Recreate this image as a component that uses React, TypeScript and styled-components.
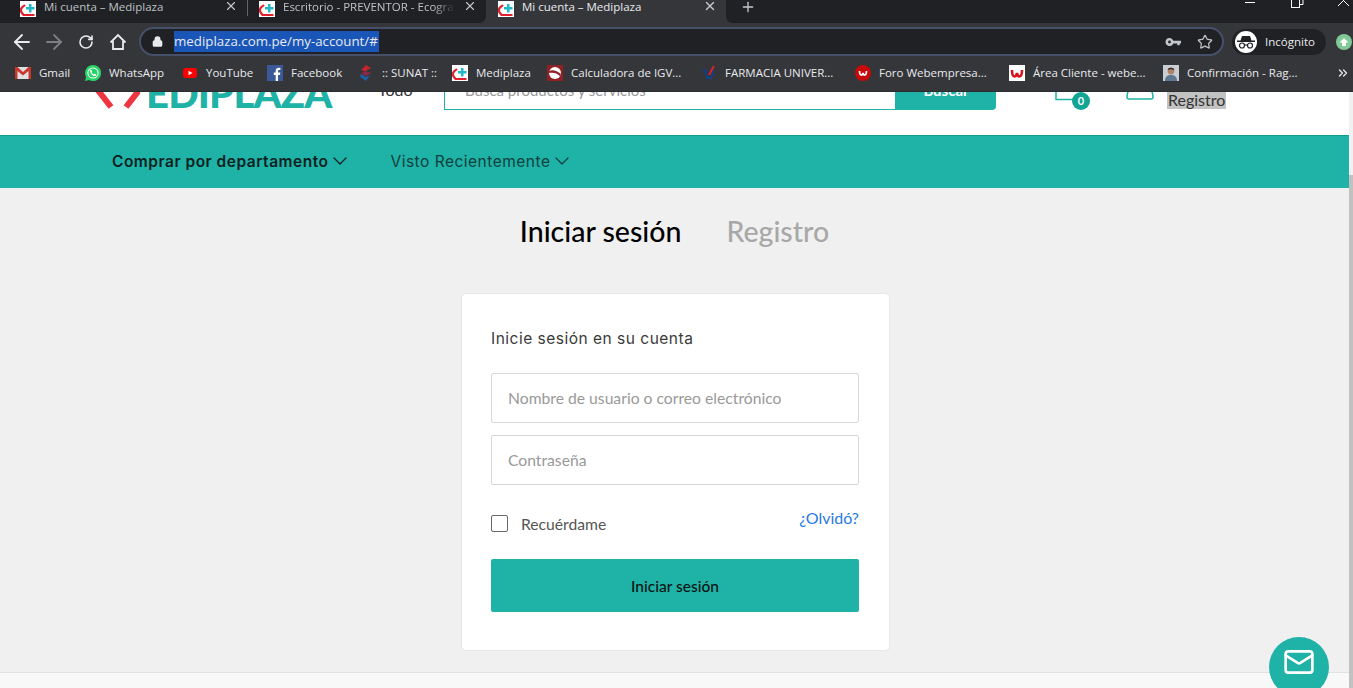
import React from 'react'
import styled, { createGlobalStyle } from 'styled-components'
import { ArrowLeft, ArrowRight, RotateCw, Lock, Star, X, Plus, ChevronDown, Mail, ChevronsRight } from 'lucide-react'

const GlobalStyle = createGlobalStyle`
  html, body { margin: 0; padding: 0; height: 100%; overflow: hidden; }
  * { box-sizing: border-box; }
`

const Favicon = () => (
  <svg width="16" height="16" viewBox="0 0 16 16">
    <rect width="16" height="16" fill="#fff" />
    <path d="M5 4 L2 6.500 C0.800 8 0.800 10.500 2 12 L3.500 14 H14.500" fill="none" stroke="#e0202a" strokeWidth="2.200" />
    <path d="M9 3h2.500v3H14.500v2.500H11.500V11.500H9V8.500H6V6h3z" fill="#22b8c9" />
  </svg>
)

const Square = styled.span<{ $bg: string }>`
  width: 16px;
  height: 16px;
  flex: none;
  display: flex;
  align-items: center;
  justify-content: center;
  background: ${p => p.$bg};
`

const bookmarks: { label: string; icon: React.ReactNode; width: number }[] = [
  {
    label: 'Gmail', width: 70,
    icon: (
      <svg width="16" height="16" viewBox="0 0 16 16">
        <rect y="2" width="16" height="12" fill="#e0e0e0" />
        <path d="M0 2h2.500L8 7l5.500-5H16v12h-2.500V6L8 10.500 2.500 6v8H0z" fill="#c9372c" />
      </svg>
    ),
  },
  {
    label: 'WhatsApp', width: 97,
    icon: (
      <svg width="16" height="16" viewBox="0 0 16 16">
        <path d="M8 0a8 8 0 0 0-6.900 12L0 16l4.100-1.100A8 8 0 1 0 8 0z" fill="#25d366" />
        <circle cx="8" cy="8" r="5.600" fill="#fff" />
        <circle cx="8" cy="8" r="4.600" fill="#25d366" />
        <path d="M5.500 5c1-1 1.500 1 1.500 1.500L6.600 7.200c.5 1 1.200 1.700 2.200 2.200l.8-.6c.6.200 2 .8 1.400 1.600-1 1.200-3 .4-4.400-1C5.300 8 4.600 6 5.500 5z" fill="#fff" />
      </svg>
    ),
  },
  {
    label: 'YouTube', width: 85,
    icon: (
      <svg width="16" height="16" viewBox="0 0 16 16">
        <rect x="1" y="3" width="14" height="10" rx="3" fill="#f00" />
        <path d="M6.500 5.700v4.600L10.500 8z" fill="#fff" />
      </svg>
    ),
  },
  {
    label: 'Facebook', width: 91,
    icon: (
      <Square $bg="#3b5998">
        <svg width="16" height="16" viewBox="0 0 16 16">
          <path d="M11 16V10h2l.3-2.400H11V6.200c0-.7.200-1.200 1.200-1.200h1.200V2.900C13 2.800 12.400 2.800 11.800 2.800 10 2.800 8.700 3.900 8.700 6v1.600H6.800V10h1.900v6z" fill="#fff" />
        </svg>
      </Square>
    ),
  },
  {
    label: ':: SUNAT ::', width: 94,
    icon: (
      <svg width="16" height="16" viewBox="0 0 16 16">
        <path d="M8 0l5 3-6 3.500L3 5z" fill="#c0272d" />
        <path d="M13 8l-5 3-5-2.500L8 6z" fill="#8a2a4a" />
        <path d="M2 9l6 3 4-1.500L8 16 2.500 12z" fill="#1d5fa8" />
      </svg>
    ),
  },
  { label: 'Mediplaza', width: 95, icon: <Favicon /> },
  {
    label: 'Calculadora de IGV...', width: 154,
    icon: (
      <Square $bg="#8f2026">
        <svg width="16" height="16" viewBox="0 0 16 16">
          <circle cx="8" cy="8" r="6" fill="#fff" />
          <path d="M2 6c4-2 8 0 12 3l-1 2C10 8 6 7 2.200 8z" fill="#8f2026" />
        </svg>
      </Square>
    ),
  },
  {
    label: 'FARMACIA UNIVER...', width: 154,
    icon: (
      <svg width="16" height="16" viewBox="0 0 16 16">
        <path d="M2 5h2l2 8h4l3-8" fill="none" stroke="#123f8c" strokeWidth="2" />
        <path d="M8 10l5-9" fill="none" stroke="#d8232a" strokeWidth="2" />
      </svg>
    ),
  },
  {
    label: 'Foro Webempresa...', width: 154,
    icon: (
      <svg width="16" height="16" viewBox="0 0 16 16">
        <circle cx="8" cy="8" r="8" fill="#c90a0a" />
        <path d="M4.500 6c0 5 3 5 3.500 2 .5 3 3.500 3 3.500-2" fill="none" stroke="#fff" strokeWidth="1.700" />
      </svg>
    ),
  },
  {
    label: 'Área Cliente - webe...', width: 154,
    icon: (
      <Square $bg="#fff">
        <svg width="16" height="16" viewBox="0 0 16 16">
          <path d="M3 5c0 8 4 8 5 3 1 5 5 5 5-3" fill="none" stroke="#d8121a" strokeWidth="2.600" />
        </svg>
      </Square>
    ),
  },
  {
    label: 'Confirmación - Rag...', width: 170,
    icon: (
      <Square $bg="#c9ced4">
        <svg width="16" height="16" viewBox="0 0 16 16">
          <circle cx="8" cy="6" r="3.400" fill="#b08468" />
          <path d="M4.700 5c0-3 6.600-3 6.600 0-2-1-4.600-1-6.600 0z" fill="#2c2c2c" />
          <path d="M2 16c0-5 3-6 6-6s6 1 6 6z" fill="#5d7890" />
        </svg>
      </Square>
    ),
  },
]

const Page = styled.div`
  width: 1353px;
  height: 688px;
  overflow: hidden;
  display: flex;
  flex-direction: column;
  font-family: 'Lato', 'Liberation Sans', sans-serif;
  background: #f0f0f0;
`

const TabStrip = styled.div`
  height: 23px;
  flex: none;
  display: flex;
  background: #202124;
  color: #bdc1c6;
  font: 11.500px 'Open Sans', 'Liberation Sans', sans-serif;
`

const Tab = styled.div<{ $active?: boolean; $width: number; $lead: number }>`
  width: ${p => p.$width}px;
  padding-left: ${p => p.$lead}px;
  display: flex;
  align-items: center;
  gap: 8px;
  flex: none;
  position: relative;
  color: ${p => (p.$active ? '#e8eaed' : '#bdc1c6')};
  background: ${p => (p.$active ? '#35363a' : 'transparent')};
  & > svg:first-child { margin-top: -6px; }
  ${p => p.$active && `
    &::before, &::after {
      content: '';
      position: absolute;
      bottom: 0;
      width: 6px;
      height: 6px;
    }
    &::before {
      left: -6px;
      background: radial-gradient(circle at 0 0, #202124 5.500px, #35363a 6px);
    }
    &::after {
      right: -6px;
      background: radial-gradient(circle at 100% 0, #202124 5.500px, #35363a 6px);
    }
  `}
`

const TabTitle = styled.span<{ $fade?: boolean }>`
  flex: 1;
  min-width: 0;
  white-space: nowrap;
  overflow: hidden;
  margin-top: -11px;
  ${p => p.$fade && `
    -webkit-mask-image: linear-gradient(to right, #000 88%, transparent);
    mask-image: linear-gradient(to right, #000 88%, transparent);
  `}
`

const TabClose = styled(X)`
  flex: none;
  margin: -11px 9px 0 0;
  color: #c4c7cb;
`

const TabDivider = styled.div`
  width: 1px;
  height: 16px;
  flex: none;
  background: #5f6368;
`

const NewTab = styled(Plus)`
  flex: none;
  margin: -1px 0 0 14px;
  color: #c4c7cb;
`

const WindowButtons = styled.div`
  margin-left: auto;
  display: flex;
  align-items: flex-start;
  gap: 33px;
  padding: 0 3px 0 0;
  color: #fff;
`

const WindowGlyph = styled.span`
  width: 13px;
  height: 12px;
  display: block;
  margin-top: -4px;
`

const MinimizeGlyph = styled.span`
  width: 10px;
  height: 1px;
  margin-top: 2px;
  margin-right: 3px;
  background: #fff;
`

const Toolbar = styled.div`
  height: 33px;
  flex: none;
  display: flex;
  align-items: center;
  padding: 4px 0 0 14px;
  background: #35363a;
  color: #dee1e6;
`

const ToolButton = styled.span<{ $dim?: boolean }>`
  width: 16px;
  margin-right: 16px;
  display: flex;
  justify-content: center;
  color: ${p => (p.$dim ? '#7b7e83' : '#e8eaed')};
  svg { flex: none; }
`

const AddressBar = styled.div`
  width: 1085px;
  height: 29px;
  margin-left: -3px;
  display: flex;
  align-items: center;
  padding: 0 9px 0 11px;
  background: #202124;
  border: 2px solid #46506a;
  border-radius: 15px;
  font: 13.300px 'Open Sans', 'Liberation Sans', sans-serif;
`

const Selected = styled.span`
  margin-left: 11px;
  width: 205px;
  height: 21px;
  line-height: 21px;
  background: #1a56b8;
  color: #e8eaed;
  white-space: nowrap;
`

const AddressEnd = styled.div`
  margin-left: auto;
  display: flex;
  align-items: center;
  gap: 16px;
  color: #c4c7cb;
`

const IncognitoPill = styled.div`
  width: 94px;
  height: 26px;
  margin-left: 8px;
  display: flex;
  align-items: center;
  gap: 8px;
  padding-left: 3px;
  background: #202124;
  border-radius: 13px;
  font: 11.500px 'Open Sans', 'Liberation Sans', sans-serif;
  color: #e8eaed;
`

const IncognitoFace = styled.span`
  width: 22px;
  height: 22px;
  flex: none;
  border-radius: 50%;
  background: #fff;
  display: flex;
  align-items: center;
  justify-content: center;
`

const ExtensionDot = styled.span`
  width: 16px;
  height: 16px;
  margin-left: 10px;
  flex: none;
  border-radius: 50%;
  background: #81c995;
  display: flex;
  align-items: center;
  justify-content: center;
`

const BookmarkBar = styled.div`
  height: 36px;
  flex: none;
  display: flex;
  align-items: center;
  padding: 0 0 2px 15px;
  background: #35363a;
  border-bottom: 1px solid #2a2b2e;
  color: #e8eaed;
  font: 11.500px 'Open Sans', 'Liberation Sans', sans-serif;
`

const Bookmark = styled.div<{ $width: number }>`
  width: ${p => p.$width}px;
  flex: none;
  display: flex;
  align-items: center;
  gap: 8px;
  white-space: nowrap;
`

const BookmarkMore = styled(ChevronsRight)`
  margin-left: auto;
  margin-right: 3px;
  color: #dfe1e5;
`

const Viewport = styled.div`
  flex: 1;
  min-height: 0;
  display: flex;
`

const Scrollbar = styled.div`
  width: 4px;
  flex: none;
  padding-top: 83px;
  background: #f1f1f1;
  &::after {
    content: '';
    display: block;
    height: 100%;
    background: #c1c1c1;
  }
`

const Content = styled.div`
  flex: 1;
  min-width: 0;
  display: flex;
  flex-direction: column;
  position: relative;
  overflow: hidden;
`

const Header = styled.header`
  height: 43px;
  flex: none;
  display: flex;
  align-items: flex-end;
  padding: 0 0 26px 95px;
  background: #fff;
  overflow: hidden;
`

const LogoMark = styled.svg`
  flex: none;
  margin-bottom: 0;
`

const LogoText = styled.span`
  width: 190px;
  height: 40px;
  flex: none;
  margin-left: 6px;
  line-height: 48px;
  font-size: 40px;
  font-weight: 900;
  letter-spacing: -0.8px;
  color: #1fb2a7;
  overflow: hidden;
  white-space: nowrap;
`

const CategorySelect = styled.div`
  width: 66px;
  margin-left: 42px;
  margin-bottom: 10px;
  display: flex;
  align-items: center;
  gap: 9px;
  font-size: 16px;
  line-height: 18px;
  color: #333;
  flex: none;
`

const SearchInput = styled.div`
  width: 452px;
  height: 40px;
  flex: none;
  padding: 0 0 0 20px;
  display: flex;
  align-items: center;
  border: 1px solid #1fb2a7;
  border-top: 0;
  color: #999;
  font-size: 15px;
  margin-bottom: -1px;
`

const SearchButton = styled.button`
  width: 100px;
  height: 40px;
  flex: none;
  margin-bottom: -1px;
  border: 0;
  border-radius: 0 0 4px 0;
  background: #1fb2a7;
  color: #fff;
  font: 700 15px 'Lato', sans-serif;
`

const CartIcon = styled.div`
  width: 36px;
  height: 30px;
  margin-left: 59px;
  flex: none;
  position: relative;
  margin-bottom: -1px;
`

const CartBadge = styled.span`
  position: absolute;
  right: 1px;
  bottom: 0;
  width: 18px;
  height: 18px;
  border-radius: 50%;
  background: #12a594;
  color: #fff;
  font: 700 11px/18px 'Lato', sans-serif;
  text-align: center;
`

const UserIcon = styled.svg`
  margin-left: 34px;
  margin-bottom: 9px;
  flex: none;
`

const AccountLink = styled.span`
  margin-left: 12px;
  padding: 0 1px;
  height: 18px;
  line-height: 17px;
  font-size: 16px;
  color: #333;
  background: #c2c2c2;
  flex: none;
`

const NavBar = styled.nav`
  height: 53px;
  flex: none;
  display: flex;
  align-items: center;
  gap: 38px;
  padding: 0 0 2px 112px;
  background: #1fb2a7;
  border-top: 1px solid #139a90;
  font-family: 'Inter', sans-serif;
  font-size: 15.500px;
  letter-spacing: 0.5px;
`

const NavItem = styled.span<{ $bold?: boolean }>`
  display: flex;
  align-items: center;
  gap: 0;
  font-weight: ${p => (p.$bold ? 600 : 400)};
  color: ${p => (p.$bold ? '#0c1f1e' : '#0f3f3c')};
`

const Main = styled.main`
  flex: 1;
  min-height: 0;
  display: flex;
  flex-direction: column;
  align-items: center;
`

const Titles = styled.div`
  display: flex;
  gap: 45px;
  height: 105px;
  padding-top: 22px;
`

const TitleTab = styled.h2<{ $active?: boolean }>`
  margin: 0;
  font-size: 28.500px;
  line-height: 42px;
  font-weight: 500;
  color: ${p => (p.$active ? '#000' : '#a8a8a8')};
`

const Card = styled.section`
  width: 429px;
  height: 358px;
  margin-left: 2px;
  flex: none;
  padding: 31px 30px 30px 29px;
  background: #fff;
  border: 1px solid #e7e7e7;
  border-radius: 5px;
`

const CardHeading = styled.h3`
  margin: 0 0 20px;
  font: 400 15.500px/28px 'Inter', sans-serif;
  letter-spacing: 0.5px;
  color: #3a3a3a;
`

const Field = styled.div`
  height: 50px;
  margin-bottom: 12px;
  padding-left: 16px;
  display: flex;
  align-items: center;
  border: 1px solid #d8d8d8;
  border-radius: 2px;
  color: #999;
  font-size: 15.700px;
`

const OptionsRow = styled.div`
  height: 44px;
  margin-top: 18px;
  margin-bottom: 12px;
  display: flex;
  justify-content: space-between;
`

const Remember = styled.label`
  display: flex;
  align-items: center;
  gap: 13px;
  height: 36px;
  margin-top: 3px;
  font-size: 15.700px;
  color: #555;
`

const CheckBox = styled.span`
  width: 17px;
  height: 17px;
  margin-top: -2px;
  border: 1.500px solid #666;
  border-radius: 2px;
`

const Forgot = styled.a`
  font-size: 16px;
  line-height: 30px;
  color: #2a7ae2;
`

const SubmitButton = styled.button`
  display: block;
  width: 100%;
  height: 53px;
  border: 0;
  border-radius: 2px;
  background: #1fb2a7;
  color: #0b1413;
  font: 500 15.500px 'Lato', sans-serif;
`

const Footer = styled.footer`
  height: 16px;
  margin-top: 21px;
  flex: none;
  align-self: stretch;
  background: #f8f8f8;
  border-top: 1px solid #e2e2e2;
`

const ChatButton = styled.button`
  position: absolute;
  left: 1269px;
  top: 545px;
  width: 60px;
  height: 60px;
  border: 0;
  padding: 0 0 10px;
  border-radius: 50%;
  background: #1fb2a7;
  color: #fff;
  display: flex;
  align-items: center;
  justify-content: center;
`

export default function App() {
  return (
    <Page>
      <GlobalStyle />
      <TabStrip>
        <Tab $width={247} $lead={20}>
          <Favicon />
          <TabTitle>Mi cuenta – Mediplaza</TabTitle>
          <TabClose size={14} strokeWidth={2} />
        </Tab>
        <TabDivider />
        <Tab $width={238} $lead={11}>
          <Favicon />
          <TabTitle $fade>Escritorio - PREVENTOR - Ecografía</TabTitle>
          <TabClose size={14} strokeWidth={2} />
        </Tab>
        <Tab $active $width={240} $lead={12}>
          <Favicon />
          <TabTitle>Mi cuenta – Mediplaza</TabTitle>
          <TabClose size={14} strokeWidth={2.400} />
        </Tab>
        <NewTab size={16} strokeWidth={2} />
        <WindowButtons>
          <MinimizeGlyph />
          <WindowGlyph>
            <svg width="13" height="12" viewBox="0 0 13 12" fill="none" stroke="#fff">
              <rect x="0.500" y="2.500" width="8" height="9" />
              <path d="M3 2.500V0.500h9v8h-3.500" />
            </svg>
          </WindowGlyph>
          <WindowGlyph>
            <svg width="13" height="12" viewBox="0 0 13 12" fill="none" stroke="#fff">
              <path d="M1 -1l11 11M12 -1L1 10" />
            </svg>
          </WindowGlyph>
        </WindowButtons>
      </TabStrip>

      <Toolbar>
        <ToolButton><ArrowLeft size={24} strokeWidth={1.800} /></ToolButton>
        <ToolButton $dim><ArrowRight size={24} strokeWidth={1.800} /></ToolButton>
        <ToolButton><RotateCw size={16} strokeWidth={2.400} /></ToolButton>
        <ToolButton>
          <svg width="18" height="18" viewBox="0 0 18 18" fill="none" stroke="#e8eaed" strokeWidth="1.800">
            <path d="M1.500 9.500 L9 2 L16.500 9.500 M4 8v8h10V8" />
          </svg>
        </ToolButton>
        <AddressBar>
          <Lock size={11} strokeWidth={3} color="#e8eaed" fill="#e8eaed" />
          <Selected>mediplaza.com.pe/my-account/#</Selected>
          <AddressEnd>
            <svg width="16" height="16" viewBox="0 0 16 16">
              <path fillRule="evenodd" d="M4.500 4a4 4 0 0 1 3.800 2.700H16V9.400h-1.300v1.800H12.300V9.400H8.300A4 4 0 1 1 4.500 4zm0 2.600a1.400 1.400 0 1 0 0 2.800 1.400 1.400 0 0 0 0-2.800z" fill="#c4c7cb" />
            </svg>
            <Star size={16} strokeWidth={1.800} />
          </AddressEnd>
        </AddressBar>
        <IncognitoPill>
          <IncognitoFace>
            <svg width="18" height="14" viewBox="0 0 18 14">
              <path d="M5 1h8l1.500 4.500H18V7H0V5.500h3.500z" fill="#202124" />
              <circle cx="5" cy="10.500" r="2.500" fill="none" stroke="#202124" strokeWidth="1.200" />
              <circle cx="13" cy="10.500" r="2.500" fill="none" stroke="#202124" strokeWidth="1.200" />
              <path d="M7.500 10h3" stroke="#202124" strokeWidth="1.200" />
            </svg>
          </IncognitoFace>
          Incógnito
        </IncognitoPill>
        <ExtensionDot>
          <svg width="10" height="10" viewBox="0 0 10 10">
            <path d="M5 1l4.500 4.500H7V9H3V5.500H.5z" fill="#fff" />
          </svg>
        </ExtensionDot>
      </Toolbar>

      <BookmarkBar>
        {bookmarks.map(b => (
          <Bookmark key={b.label} $width={b.width}>
            {b.icon}
            {b.label}
          </Bookmark>
        ))}
        <BookmarkMore size={14} strokeWidth={2.500} />
      </BookmarkBar>

      <Viewport>
        <Content>
          <Header>
            <LogoMark width="45" height="40" viewBox="0 0 45 40">
              <path d="M2 20 L16 38 M45 20 L31 38" fill="none" stroke="#ee3540" strokeWidth="6" />
            </LogoMark>
            <LogoText>EDIPLAZA</LogoText>
            <CategorySelect>
              Todo
              <ChevronDown size={11} color="#777" />
            </CategorySelect>
            <SearchInput>Busca productos y servicios</SearchInput>
            <SearchButton>Buscar</SearchButton>
            <CartIcon>
              <svg width="24" height="30" viewBox="0 0 24 30" fill="none" stroke="#1fb2a7" strokeWidth="1.500">
                <path d="M1 0V19.500H24" />
              </svg>
              <CartBadge>0</CartBadge>
            </CartIcon>
            <UserIcon width="30" height="30" viewBox="0 0 30 30" fill="none" stroke="#1fb2a7" strokeWidth="1.500">
              <circle cx="15" cy="6" r="8" />
              <path d="M2 27c0-8 6-11 13-11s13 3 13 11c0 1-1 2-2 2H4c-1 0-2-1-2-2z" />
            </UserIcon>
            <AccountLink>Registro</AccountLink>
          </Header>

          <NavBar>
            <NavItem $bold>
              Comprar por departamento
              <ChevronDown size={24} strokeWidth={1.200} />
            </NavItem>
            <NavItem>
              Visto Recientemente
              <ChevronDown size={24} strokeWidth={1.200} />
            </NavItem>
          </NavBar>

          <Main>
            <Titles>
              <TitleTab $active>Iniciar sesión</TitleTab>
              <TitleTab>Registro</TitleTab>
            </Titles>
            <Card>
              <CardHeading>Inicie sesión en su cuenta</CardHeading>
              <Field>Nombre de usuario o correo electrónico</Field>
              <Field>Contraseña</Field>
              <OptionsRow>
                <Remember>
                  <CheckBox />
                  Recuérdame
                </Remember>
                <Forgot>¿Olvidó?</Forgot>
              </OptionsRow>
              <SubmitButton>Iniciar sesión</SubmitButton>
            </Card>
            <Footer />
          </Main>

          <ChatButton>
            <Mail size={32} strokeWidth={2} />
          </ChatButton>
        </Content>
        <Scrollbar />
      </Viewport>
    </Page>
  )
}
